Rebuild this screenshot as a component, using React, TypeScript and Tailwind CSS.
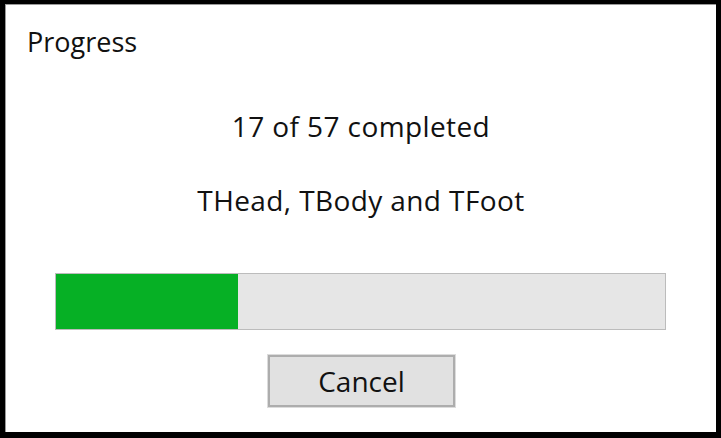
import React from "react";

export default function App() {
  const pct = (17 / 57) * 100;
  return (
    <div className="w-[721px] h-[438px] bg-black pt-[4px] pl-[5px] pr-[5px] pb-[6px]" style={{ fontFamily: '"Open Sans", "Noto Sans", sans-serif' }}>
      <div className="w-full h-full bg-white border-t border-l border-[#9a9a9a] flex flex-col text-[#111]">
        <div className="pl-[21px] pt-[19px] h-[55px] text-[27px] leading-[36px]">Progress</div>
        <div className="mt-[48px] h-[36px] text-center text-[28px] leading-[36px] tracking-[0.4px]">17 of 57 completed</div>
        <div className="mt-[38px] h-[36px] text-center text-[28px] leading-[36px] tracking-[0.4px]">THead, TBody and TFoot</div>
        <div className="mt-[55px] ml-[49px] w-[611px] h-[57px] border border-[#bcbcbc] bg-[#e6e6e6] flex">
          <div className="h-full bg-[#06b025]" style={{ width: `${pct}%` }} />
        </div>
        <div className="flex justify-center mt-[25px] pl-[1px]">
          <button className="w-[187px] h-[52px] border-2 border-[#adadad] bg-[#e1e1e1] text-[28px] leading-none text-[#111] outline outline-1 outline-[#dcdcdc]">
            Cancel
          </button>
        </div>
      </div>
    </div>
  );
}
